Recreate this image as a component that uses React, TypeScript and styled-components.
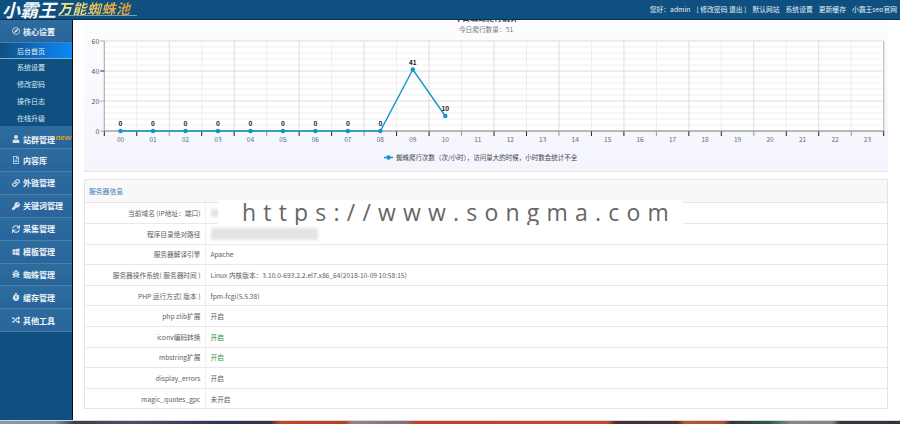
import React from 'react';
import styled, { createGlobalStyle } from 'styled-components';
import {
  FaBug,
  FaKey,
  FaLink,
  FaRandom,
  FaRegCompass,
  FaRegFileAlt,
  FaStopwatch,
  FaSync,
  FaUser,
  FaWindows,
} from 'react-icons/fa';

const FONT = `"Noto Sans CJK SC", "Liberation Sans", sans-serif`;

const GlobalStyle = createGlobalStyle`
  html, body {
    margin: 0;
    padding: 0;
    background: #fff;
    font-family: ${FONT};
  }
`;

const subMenus = ['后台首页', '系统设置', '修改密码', '操作日志', '在线升级'];

const groups = [
  { name: '站群管理', icon: <FaUser />, isNew: true },
  { name: '内容库', icon: <FaRegFileAlt /> },
  { name: '外链管理', icon: <FaLink /> },
  { name: '关键词管理', icon: <FaKey /> },
  { name: '采集管理', icon: <FaSync /> },
  { name: '模板管理', icon: <FaWindows /> },
  { name: '蜘蛛管理', icon: <FaBug /> },
  { name: '缓存管理', icon: <FaStopwatch /> },
  { name: '其他工具', icon: <FaRandom /> },
];

const topLinks = ['您好：admin', '[ 修改密码 退出 ]', '默认网站', '系统设置', '更新缓存', '小霸王seo官网'];

type InfoRow = {
  label: string;
  value?: string;
  tone?: 'dark' | 'green' | 'lime';
  blur?: { width: number; height: number };
};

const infoRows: InfoRow[] = [
  { label: '当前域名 (IP地址：端口)', blur: { width: 10, height: 8 } },
  { label: '程序目录绝对路径', blur: { width: 107, height: 12 } },
  { label: '服务器解译引擎', value: 'Apache' },
  { label: '服务器操作系统( 服务器时间 )', value: 'Linux 内核版本：3.10.0-693.2.2.el7.x86_64(2018-10-09 10:58:15)' },
  { label: 'PHP 运行方式( 版本 )', value: 'fpm-fcgi(5.5.38)' },
  { label: 'php zlib扩展', value: '开启' },
  { label: 'iconv编码转换', value: '开启', tone: 'green' },
  { label: 'mbstring扩展', value: '开启', tone: 'lime' },
  { label: 'display_errors', value: '开启' },
  { label: 'magic_quotes_gpc', value: '未开启' },
];

const PLOT_LEFT = 20.3;
const PLOT_RIGHT = 799.7;
const PLOT_TOP = 21;
const PLOT_BOTTOM = 111;
const SLOT = (PLOT_RIGHT - PLOT_LEFT) / 24;
const hours = Array.from({ length: 24 }, (_, i) => String(i).padStart(2, '0'));
const spider = [0, 0, 0, 0, 0, 0, 0, 0, 0, 41, 10];
const xOf = (i: number) => PLOT_LEFT + SLOT * (i + 0.5);
const yOf = (v: number) => PLOT_BOTTOM - v * 1.5;

const SpiderChart: React.FC = () => (
  <ChartSvg viewBox="0 0 804 152" width="804" height="152">
    <defs>
      <linearGradient id="cardBg" x1="0" y1="0" x2="0" y2="1">
        <stop offset="0" stopColor="#fdfdff" />
        <stop offset="1" stopColor="#f4f4fd" />
      </linearGradient>
    </defs>
    <rect x="0" y="0" width="804" height="152" fill="url(#cardBg)" />
    <text x="402" y="1" textAnchor="middle" fontSize="8" fontWeight="700" fill="#444">今日蜘蛛爬行统计</text>
    <text x="402" y="12" textAnchor="middle" fontSize="6.7" fill="#777">今日爬行数量：51</text>
    <rect x={PLOT_LEFT} y={PLOT_TOP} width={PLOT_RIGHT - PLOT_LEFT} height={PLOT_BOTTOM - PLOT_TOP} fill="#fff" />

    {Array.from({ length: 16 }, (_, i) => (
      <line
        key={i}
        x1={PLOT_LEFT}
        x2={PLOT_RIGHT}
        y1={PLOT_TOP + i * 6}
        y2={PLOT_TOP + i * 6}
        stroke={i % 5 === 0 ? '#dcdcdc' : '#efefef'}
        strokeWidth={i % 5 === 0 ? 1 : 0.9}
      />
    ))}
    {Array.from({ length: 25 }, (_, i) => (
      <g key={i}>
        <line
          x1={PLOT_LEFT + i * SLOT}
          x2={PLOT_LEFT + i * SLOT}
          y1={PLOT_TOP}
          y2={PLOT_BOTTOM}
          stroke={i % 2 === 0 ? '#dedede' : '#eeeeee'}
        />
        <line
          x1={PLOT_LEFT + i * SLOT}
          x2={PLOT_LEFT + i * SLOT}
          y1={PLOT_BOTTOM}
          y2={PLOT_BOTTOM + 5}
          stroke={i % 3 === 2 ? '#999' : '#222'}
        />
      </g>
    ))}
    <line x1={PLOT_LEFT} x2={PLOT_LEFT} y1={PLOT_TOP} y2={PLOT_BOTTOM} stroke="#aaa" />
    <line x1={PLOT_RIGHT} x2={PLOT_RIGHT} y1={PLOT_TOP} y2={PLOT_BOTTOM} stroke="#c8c8c8" strokeWidth="1.4" />
    <line x1={PLOT_LEFT} x2={PLOT_RIGHT} y1={PLOT_BOTTOM} y2={PLOT_BOTTOM} stroke="#888" />

    {[60, 40, 20, 0].map((v) => (
      <g key={v}>
        <line x1={PLOT_LEFT - 4} x2={PLOT_LEFT} y1={yOf(v)} y2={yOf(v)} stroke={v === 40 ? '#222' : '#aaa'} />
        <text x={PLOT_LEFT - 5} y={yOf(v) + 2.5} textAnchor="end" fontSize="7" fill="#555">{v}</text>
      </g>
    ))}
    {hours.map((h, i) => (
      <text key={h} x={xOf(i)} y={121.5} textAnchor="middle" fontSize="6.5" fill="#667">{h}</text>
    ))}

    <polyline
      points={spider.map((v, i) => `${xOf(i)},${yOf(v)}`).join(' ')}
      fill="none"
      stroke="#0d96c8"
      strokeWidth="1.4"
    />
    {spider.map((v, i) => (
      <g key={i}>
        <circle cx={xOf(i)} cy={yOf(v)} r="2.2" fill="#0d96c8" />
        <text x={xOf(i)} y={yOf(v) - 5} textAnchor="middle" fontSize="6.5" fontWeight="700" fill="#222">{v}</text>
      </g>
    ))}

    <line x1="300" x2="309" y1="137.5" y2="137.5" stroke="#0d96c8" strokeWidth="1.4" />
    <circle cx="304.5" cy="137.5" r="2.2" fill="#0d96c8" />
    <text x="312" y="140" fontSize="6.5" fill="#444">蜘蛛爬行次数（次/小时），访问量大的时候，小时数会统计不全</text>
  </ChartSvg>
);

export default function App() {
  return (
    <>
      <GlobalStyle />
      <Page>
        <TopBar>
          <Logo>
            <LogoMain>小霸王</LogoMain>
            <LogoSub>万能蜘蛛池</LogoSub>
          </Logo>
          <TopNav>
            {topLinks.map((link) => (
              <span key={link}>{link}</span>
            ))}
          </TopNav>
        </TopBar>
        <Body>
          <Sidebar>
            <GroupRow $first>
              <FaRegCompass />
              核心设置
            </GroupRow>
            {subMenus.map((item, i) => (
              <SubRow key={item} $active={i === 0}>
                {item}
              </SubRow>
            ))}
            {groups.map((g) => (
              <GroupRow key={g.name} $lowered={g.isNew}>
                {g.icon}
                {g.name}
                {g.isNew && <NewBadge>new</NewBadge>}
              </GroupRow>
            ))}
          </Sidebar>
          <Main>
            <ChartCard>
              <SpiderChart />
            </ChartCard>
            <InfoCard>
              <InfoTitle>服务器信息</InfoTitle>
              <InfoTable>
                <tbody>
                  {infoRows.map((row) => (
                    <tr key={row.label}>
                      <LabelCell>{row.label}</LabelCell>
                      <ValueCell $tone={row.tone}>
                        {row.blur ? <BlurPatch $width={row.blur.width} $height={row.blur.height} /> : row.value}
                      </ValueCell>
                    </tr>
                  ))}
                </tbody>
              </InfoTable>
            </InfoCard>
            <Watermark>https://www.songma.com</Watermark>
          </Main>
        </Body>
        <BottomStrip />
      </Page>
    </>
  );
}

const Page = styled.div`
  display: flex;
  flex-direction: column;
  width: 900px;
  height: 424px;
  overflow: hidden;
  background: #fff;
`;

const TopBar = styled.header`
  display: flex;
  flex: 0 0 20px;
  box-sizing: border-box;
  align-items: center;
  justify-content: space-between;
  height: 20px;
  padding: 0 3px 0 2px;
  background: #0f5080;
  border-bottom: 1px solid #06304f;
`;

const Logo = styled.div`
  display: flex;
  align-items: flex-start;
  align-self: flex-start;
  font-style: italic;
  font-weight: 700;
  white-space: nowrap;
`;

const LogoMain = styled.span`
  color: #f4f8fb;
  font-size: 18px;
  line-height: 19px;
`;

const LogoSub = styled.span`
  margin-top: 2px;
  margin-left: 2px;
  padding-right: 6px;
  background: linear-gradient(90deg, #f7ee9a, #e8b54a 60%, #d98f2e);
  -webkit-background-clip: text;
  background-clip: text;
  border-bottom: 1px solid #7f9db4;
  color: transparent;
  font-size: 14px;
  letter-spacing: 0.5px;
  line-height: 13px;
`;

const TopNav = styled.nav`
  display: flex;
  gap: 6px;
  color: #e8f0f6;
  font-size: 6.8px;
  line-height: 19px;
  white-space: nowrap;
`;

const Body = styled.div`
  display: flex;
  flex: 1;
  min-height: 0;
`;

const Sidebar = styled.aside`
  flex: 0 0 73px;
  box-sizing: border-box;
  width: 73px;
  background: #0f5080;
  border-right: 1px solid #0a0a0a;
`;

const GroupRow = styled.div<{ $first?: boolean; $lowered?: boolean }>`
  position: relative;
  display: flex;
  box-sizing: border-box;
  align-items: center;
  gap: 3px;
  height: ${(p) => (p.$first ? '23px' : '22.9px')};
  padding-top: ${(p) => (p.$lowered ? '4px' : '0')};
  padding-left: 12px;
  background: linear-gradient(180deg, #2d6c9e, #29649a);
  border-bottom: 1px solid #4b80a9;
  color: #eef4f8;
  font-size: 8px;
  font-weight: 700;
  white-space: nowrap;

  svg {
    flex: 0 0 8px;
    width: 8px;
    height: 8px;
    color: #d5e2ec;
  }
`;

const SubRow = styled.div<{ $active?: boolean }>`
  display: flex;
  box-sizing: border-box;
  align-items: center;
  height: ${(p) => (p.$active ? '16px' : '16.8px')};
  padding-left: 17px;
  background: ${(p) => (p.$active ? 'linear-gradient(90deg, #0f5080, #0d78dc 70%, #0a88f5)' : 'transparent')};
  border-bottom: ${(p) => (p.$active ? '1px solid #7fb2dc' : 'none')};
  color: #dfe9f1;
  font-size: 7px;
`;

const NewBadge = styled.span`
  position: absolute;
  top: 8px;
  right: 1px;
  color: #e09a30;
  font-family: "Liberation Sans", sans-serif;
  font-size: 8px;
  font-style: italic;
  font-weight: 700;
  line-height: 8px;
`;

const Main = styled.main`
  position: relative;
  display: flex;
  flex: 1;
  flex-direction: column;
  gap: 7px;
  padding: 0 12px 0 11px;
  min-width: 0;
`;

const ChartCard = styled.section`
  flex: 0 0 152px;
  box-sizing: border-box;
  height: 152px;
  overflow: hidden;
  border-bottom: 1px solid #e4e4ee;
`;

const ChartSvg = styled.svg`
  display: block;
  font-family: ${FONT};
`;

const InfoCard = styled.section`
  box-sizing: border-box;
  height: 230px;
  border: 1px solid #e4e4e4;
`;

const InfoTitle = styled.div`
  box-sizing: border-box;
  height: 23px;
  padding-left: 4px;
  background: #f8f8f8;
  border-bottom: 1px solid #e6e6e6;
  color: #3a7ab0;
  font-size: 6.8px;
  line-height: 22px;
`;

const InfoTable = styled.table`
  width: 100%;
  border-collapse: collapse;
  table-layout: fixed;
  color: #5c5c5c;
  font-size: 6.7px;

  tr {
    height: 20.6px;
  }
  tr + tr td {
    border-top: 1px solid #e8e8e8;
  }
`;

const LabelCell = styled.td`
  width: 120px;
  box-sizing: border-box;
  padding: 0 4px 0 0;
  border-right: 1px solid #eee;
  text-align: right;
  white-space: nowrap;
`;

const VALUE_TONES = { dark: '#444', green: '#1c8a1c', lime: '#2f9a3a' };

const ValueCell = styled.td<{ $tone?: keyof typeof VALUE_TONES }>`
  padding: 0 0 0 5px;
  color: ${(p) => (p.$tone ? VALUE_TONES[p.$tone] : 'inherit')};
  white-space: nowrap;
`;

const BlurPatch = styled.span<{ $width: number; $height: number }>`
  display: block;
  width: ${(p) => p.$width}px;
  height: ${(p) => p.$height}px;
  background: #e4e4e4;
  filter: blur(1.5px);
`;

const Watermark = styled.div`
  position: absolute;
  top: 180px;
  left: 145px;
  box-sizing: border-box;
  width: 465px;
  height: 25px;
  overflow: hidden;
  padding-left: 24px;
  background: #fff;
  color: #666;
  font-family: "Open Sans", sans-serif;
  font-size: 23px;
  letter-spacing: 7.2px;
  line-height: 25px;
  white-space: nowrap;
`;

const BottomStrip = styled.footer`
  flex: 0 0 4px;
  box-sizing: border-box;
  height: 4px;
  background: linear-gradient(
    90deg,
    #8f9aa6 0,
    #8a8f96 55px,
    #3c3f47 75px,
    #5a4a62 130px,
    #2f3550 224px,
    #3a3040 270px,
    #c4481f 280px,
    #b84020 345px,
    #9c8080 352px,
    #8c6a6a 408px,
    #c93f22 415px,
    #c8452a 608px,
    #4a2c2c 616px,
    #55302c 677px,
    #b8552a 685px,
    #b0502a 723px,
    #3a3236 731px,
    #2f5a45 769px,
    #8a8a80 792px,
    #858580 832px,
    #35383e 840px,
    #30333a 900px
  );
  border-top: 1px solid #c9d8e6;
`;
